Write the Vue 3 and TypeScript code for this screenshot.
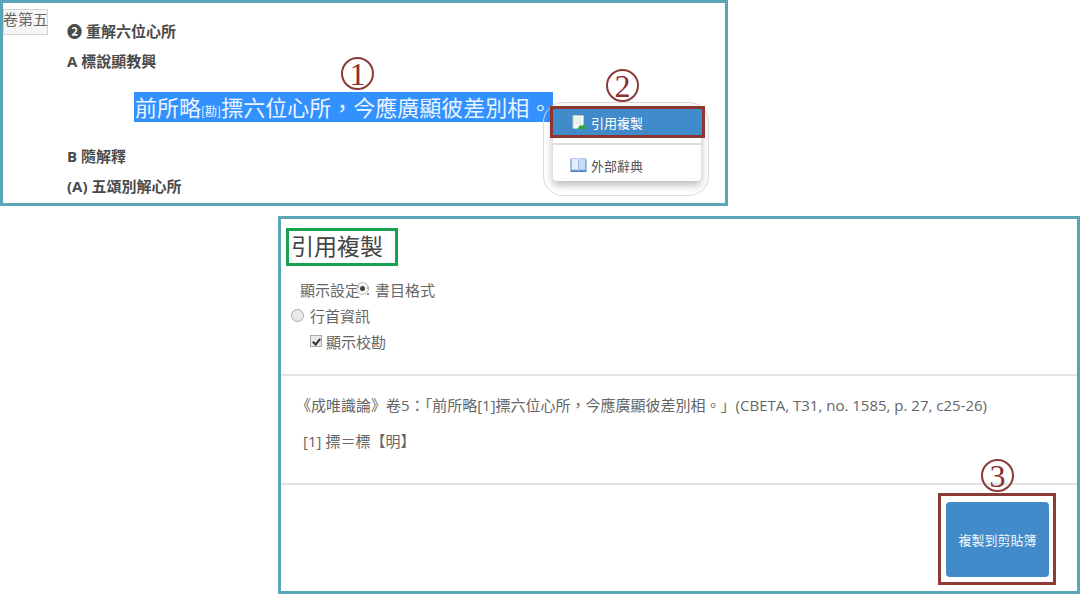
<script setup lang="ts">
import { ref } from 'vue'

const format = ref<'biblio' | 'line'>('biblio')
const showNotes = ref(true)
const citation = '《成唯識論》卷5\uFF1A「前所略[1]摽六位心所\uFF0C今應廣顯彼差別相。」'
const source = '(CBETA, T31, no. 1585, p. 27, c25-26)'
</script>

<template>
  <main class="page">
    <section class="panel reader">
      <span class="scroll-tab">卷第五</span>
      <div class="outline">
        <p class="line">❷ 重解六位心所</p>
        <p class="line">A 標說顯教興</p>
        <p class="passage"><mark class="selected">前所略<small class="note">[勘]</small>摽六位心所&#xFF0C;今應廣顯彼差別相。</mark></p>
        <p class="line">B 隨解釋</p>
        <p class="line">(A) 五頌別解心所</p>
      </div>
      <span class="step step-one">1</span>
      <div class="popup">
        <span class="step step-two">2</span>
        <div class="menu">
          <button class="item active" type="button">
            <svg class="icon" viewBox="0 0 16 16" aria-hidden="true">
              <path d="M2.500 1.500h10.500v13h-10.500z" fill="#f7fbf4" stroke="#b9ccbe" />
              <path d="M4 3h7v8H4z" fill="#e9f2ea" />
              <path d="M12.500 7.500v3H15l-.5 4.500H7l2-3.500h3.500z" fill="#2fa545" />
            </svg>
            引用複製
          </button>
          <div class="rule"></div>
          <button class="item" type="button">
            <svg class="icon" viewBox="0 0 16 16" aria-hidden="true">
              <path d="M0 2h16v13H0z" fill="#4b83c5" />
              <path d="M1 1.500h6L8 2.500v11L6.500 13H1z" fill="#e2eefb" stroke="#8fb5e2" stroke-width=".7" />
              <path d="M15 1.500H9l-1 1v11l1.500-.5H15z" fill="#c7ddf6" stroke="#8fb5e2" stroke-width=".7" />
            </svg>
            外部辭典
          </button>
        </div>
      </div>
    </section>

    <section class="panel dialog">
      <header class="settings">
        <h1 class="title">引用複製</h1>
        <div class="row first">
          <span class="legend">顯示設定<input id="biblio" v-model="format" class="radio over" type="radio" name="format" value="biblio" />:</span>
          <label for="biblio">書目格式</label>
        </div>
        <div class="row second">
          <input id="line" v-model="format" class="radio" type="radio" name="format" value="line" />
          <label for="line">行首資訊</label>
        </div>
        <div class="row third">
          <input id="notes" v-model="showNotes" class="check" type="checkbox" />
          <label for="notes">顯示校勘</label>
        </div>
      </header>
      <div class="result">
        <p class="cite">{{ citation }}{{ source }}</p>
        <p class="cite foot">[1] 摽&#xFF1D;標【明】</p>
      </div>
      <footer class="actions">
        <div class="frame">
          <span class="step step-three">3</span>
          <button class="copy" type="button">複製到剪貼簿</button>
        </div>
      </footer>
    </section>
  </main>
</template>

<style>
body {
  margin: 0;
  background: #fff;
}
</style>

<style scoped>
.page {
  display: flex;
  flex-direction: column;
  gap: 10px;
  font-family: "Open Sans", "Noto Sans CJK TC", sans-serif;
  font-size: 15px;
  color: #666;
}
.page * {
  box-sizing: border-box;
}
p,
h1 {
  margin: 0;
}
button {
  font: inherit;
  border: 0;
  padding: 0;
}
.panel {
  position: relative;
  border: 3px solid #5aa6b8;
  background: #fff;
}
.reader {
  width: 67.4%;
  display: flex;
  align-items: flex-start;
  padding: 6px 0 2px;
}
.scroll-tab {
  flex: none;
  width: 45px;
  height: 26px;
  box-shadow: inset 0 0 0 1px #d5d5d5;
  background: #f5f5f5;
  line-height: 20px;
  white-space: nowrap;
}
.outline {
  padding: 7px 0 0 19px;
}
.line {
  line-height: 30px;
  font-weight: 700;
  color: #4a4a4a;
  white-space: nowrap;
}
.passage {
  margin: 16px 0 19px 67px;
  line-height: 30px;
  white-space: nowrap;
}
.selected {
  display: inline-block;
  height: 30px;
  padding: 0 2px 0 1px;
  background: #3390ff;
  color: #eaf4ff;
  font-family: "Noto Sans CJK TC", sans-serif;
  font-size: 22px;
  line-height: 28px;
  vertical-align: top;
}
.note {
  font-size: 12px;
}
.step {
  position: absolute;
  display: flex;
  align-items: center;
  justify-content: center;
  width: 33px;
  height: 33px;
  border: 2px solid #8b3a3a;
  border-radius: 50%;
  color: #8b3030;
  font-family: "Liberation Serif", serif;
  font-size: 32px;
  line-height: 28px;
}
.step-one {
  left: 338px;
  top: 54px;
}
.step-two {
  left: 62px;
  top: -34px;
}
.step-three {
  left: 40px;
  top: -37px;
}
.popup {
  position: absolute;
  right: 16px;
  top: 99px;
  width: 166px;
  padding: 3px 4px 14px;
  border: 1px solid #dcdcdc;
  border-radius: 20px;
}
.menu {
  margin: 0 3px 0 5px;
  border-radius: 4px;
  box-shadow: 0 4px 8px #00000048;
  background: #fff;
}
.item {
  display: flex;
  align-items: center;
  gap: 4px;
  width: 100%;
  height: 32px;
  padding-left: 17px;
  background: none;
  color: #555;
  font-size: 13px;
}
.item.active {
  position: relative;
  width: 155px;
  height: 32px;
  margin: 0 -3px;
  border: 3px solid #8c3531;
  background: #428bca;
  color: #fff;
}
.icon {
  width: 17px;
  height: 16px;
}
.rule {
  height: 2px;
  margin: 5px 0 4px;
  background: #ddd;
}
.dialog {
  margin-left: 25.75%;
}
.settings {
  padding: 9px 5px 20px;
}
.title {
  width: 112px;
  height: 38px;
  margin-bottom: 10px;
  padding-left: 2px;
  border: 3px solid #16a250;
  color: #444;
  font-size: 23px;
  font-weight: 400;
  line-height: 30px;
  white-space: nowrap;
}
.row {
  display: flex;
  align-items: center;
  height: 26px;
}
.first {
  padding-left: 14px;
}
.second {
  gap: 6px;
  padding-left: 5px;
}
.third {
  gap: 4px;
  padding-left: 24px;
}
.legend {
  position: relative;
  width: 75px;
  display: flex;
  align-items: center;
  gap: 6px;
}
.radio,
.check {
  appearance: none;
  flex: none;
  display: grid;
  place-items: center;
  width: 13px;
  height: 13px;
  margin: 0;
  border: 1px solid #aaa;
  background: #e9e9e9;
}
.radio {
  border-radius: 50%;
}
.radio.over {
  position: absolute;
  left: 56px;
  top: 3px;
  background: #eeeeee66;
  border-color: #bbb;
}
.radio:checked::before {
  content: "";
  width: 5px;
  height: 5px;
  border-radius: 50%;
  background: #444;
}
.check {
  width: 12px;
  height: 12px;
}
.check:checked::before {
  content: "";
  box-sizing: border-box;
  width: 5px;
  height: 8px;
  border: solid #333;
  border-width: 0 2px 2px 0;
  rotate: 40deg;
}
.result {
  display: flex;
  flex-direction: column;
  gap: 10px;
  padding: 16px 16px 29px 15px;
  border: solid #e3e3e3;
  border-width: 2px 0;
}
.cite {
  line-height: 26px;
}
.foot {
  padding-left: 7px;
}
.actions {
  display: flex;
  justify-content: flex-end;
  padding: 8px 21px 6px;
}
.frame {
  position: relative;
  width: 118px;
  padding: 6px 4px 5px 5px;
  border: 3px solid #8c3b36;
}
.copy {
  display: block;
  width: 100%;
  height: 75px;
  border-radius: 4px;
  background: #428bca;
  color: #f0f6fb;
  font-size: 13px;
}
</style>
